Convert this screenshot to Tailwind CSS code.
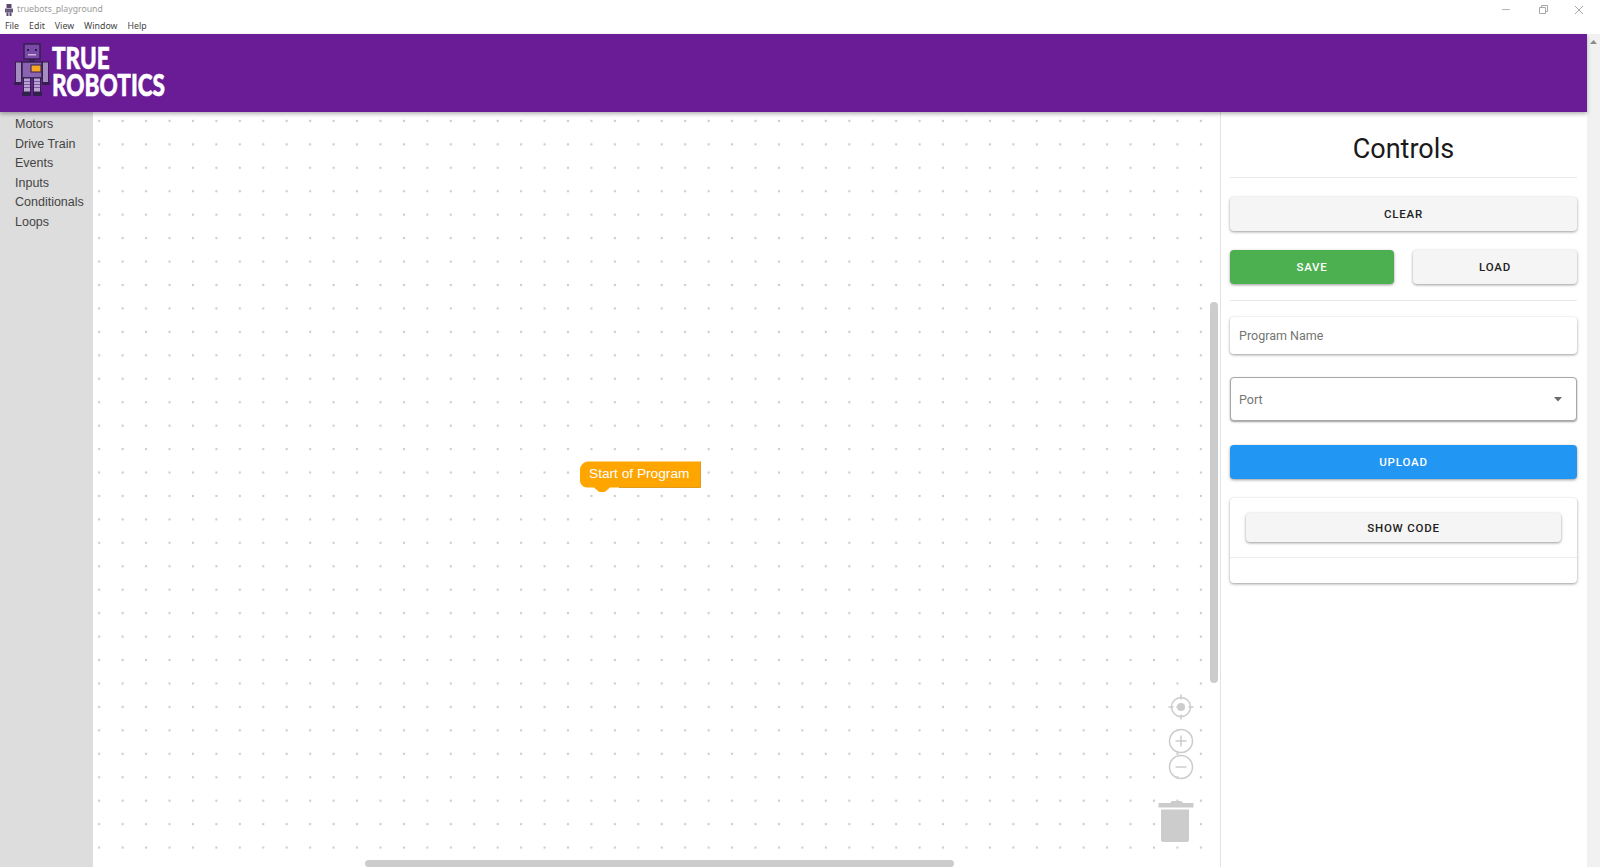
<!DOCTYPE html>
<html lang="en">
<head>
  <meta charset="UTF-8" />
  <title>truebots_playground</title>
  <script src="https://cdn.jsdelivr.net/npm/@tailwindcss/browser@4"></script>
</head>
<body class="bg-white overflow-hidden">
<div class="h-[867px] w-[1600px] flex flex-col overflow-hidden font-['Liberation_Sans',sans-serif]">

  <!-- window title bar -->
  <div class="h-[18px] pt-[1px] flex items-center pl-[4px] relative">
    <svg width="10" height="12" viewBox="0 0 10 12" class="mr-[3px]">
      <rect x="2.5" y="0" width="5" height="4" fill="#5b4a70"/>
      <rect x="1" y="4.500" width="8" height="4" fill="#6a5a80"/>
      <rect x="2.500" y="8.500" width="2" height="3.500" fill="#5b4a70"/>
      <rect x="5.500" y="8.500" width="2" height="3.500" fill="#5b4a70"/>
    </svg>
    <span class="font-['Noto_Sans',sans-serif] text-[8.700px] text-[#9a9a9a]">truebots_playground</span>
    <div class="ml-auto flex items-center h-full">
      <svg width="36" height="18" viewBox="0 0 36 18"><path d="M13 8.500H21" stroke="#b5b5b5" fill="none"/></svg>
      <svg width="36" height="18" viewBox="0 0 36 18"><path d="M14.500 6.500h6v6h-6zM16.500 6.500v-2h6v6h-2" stroke="#a8a8a8" fill="none"/></svg>
      <svg width="36" height="18" viewBox="0 0 36 18" class="mr-[3px]"><path d="M14 5l8 8M22 5l-8 8" stroke="#a8a8a8" fill="none"/></svg>
    </div>
  </div>

  <!-- menu bar -->
  <div class="h-[16px] pt-[2px] flex items-center gap-[10px] pl-[5px] font-['Noto_Sans',sans-serif] text-[8.800px] text-[#444]">
    <span>File</span><span>Edit</span><span>View</span><span>Window</span><span>Help</span>
  </div>

  <div class="flex flex-1 min-h-0">
    <div class="flex flex-col flex-1 min-w-0">

      <!-- app header -->
      <header class="h-[78px] shrink-0 bg-[#6a1b96] flex items-center pl-[14px] relative z-10 shadow-[0_2px_4px_rgba(0,0,0,0.3)]">
        <svg width="36" height="54" viewBox="0 0 36 54" class="mr-[2px] mb-[6px]">
          <rect x="10" y="1" width="16" height="15" fill="#7b4aa8" stroke="#33204f" stroke-width="1.500"/>
          <rect x="13" y="6" width="2" height="2" fill="#2c1c45"/>
          <rect x="21" y="6" width="2" height="2" fill="#2c1c45"/>
          <rect x="14" y="11" width="8" height="1.500" fill="#c9b4dc"/>
          <rect x="15" y="16" width="6" height="3" fill="#33204f"/>
          <rect x="8" y="19" width="20" height="16" fill="#8a64b0" stroke="#33204f" stroke-width="1.500"/>
          <rect x="17" y="22" width="10" height="7" fill="#f5a623" stroke="#33204f"/>
          <rect x="1.500" y="19" width="6" height="21" fill="#a48cc0" stroke="#33204f"/>
          <rect x="28.500" y="19" width="6" height="21" fill="#a48cc0" stroke="#33204f"/>
          <rect x="0" y="39" width="8" height="3" fill="#33204f"/>
          <rect x="28" y="39" width="8" height="3" fill="#33204f"/>
          <rect x="9.500" y="35" width="7" height="14" fill="#b9a6cf" stroke="#33204f"/>
          <rect x="19.500" y="35" width="7" height="14" fill="#b9a6cf" stroke="#33204f"/>
          <path d="M10 38.500h6M10 41.500h6M10 44.500h6M20 38.500h6M20 41.500h6M20 44.500h6" stroke="#7b5a9f"/>
          <rect x="8" y="49" width="9" height="4" fill="#33204f"/>
          <rect x="19" y="49" width="9" height="4" fill="#33204f"/>
        </svg>
        <div class="font-['Lato',sans-serif] font-black text-white text-[30px] leading-[27px] uppercase origin-left scale-x-[0.75] mb-[4px] [-webkit-text-stroke:0.6px_white]">
          <div>True</div>
          <div>Robotics</div>
        </div>
      </header>

      <div class="flex flex-1 min-h-0">
        <!-- block categories -->
        <nav class="w-[93px] shrink-0 bg-[#dddddd] pl-[15px] pt-[3px] text-[12.500px] leading-[19.600px] text-[#444]">
          <div>Motors</div>
          <div>Drive Train</div>
          <div>Events</div>
          <div>Inputs</div>
          <div>Conditionals</div>
          <div>Loops</div>
        </nav>

        <!-- workspace -->
        <main class="w-[1128px] shrink-0 relative border-r border-[#e3e3e3] overflow-hidden">
          <svg class="absolute inset-0" width="1128" height="755">
            <defs>
              <pattern id="dots" x="-5.500" y="-2.800" width="23.440" height="23.440" patternUnits="userSpaceOnUse">
                <circle cx="11.700" cy="11.700" r="1.200" fill="#cccccc"/>
              </pattern>
            </defs>
            <rect width="1128" height="755" fill="url(#dots)"/>
          </svg>

          <!-- start block -->
          <svg class="absolute left-[486px] top-[349px]" width="125" height="34" viewBox="0 0 125 34">
            <path d="M10 0.500H121.500V26.500H31l-4 3.500a3 3 0 0 1-3 1h-2a3 3 0 0 1-3-1l-4-3.500H8a7 7 0 0 1-7-7V9a8.500 8.500 0 0 1 9-8.500z" fill="#ffa500"/>
            <path d="M121.500 0.500V26.500H40" fill="none" stroke="#e09a1e"/>
          </svg>
          <span class="absolute left-[496px] top-[353px] text-[13.700px] leading-[18px] text-white">Start of Program</span>

          <!-- center / zoom controls -->
          <svg class="absolute left-[1074px] top-[581px]" width="28" height="28" viewBox="0 0 28 28" fill="none" stroke="#cccccc" stroke-width="1.500">
            <circle cx="14" cy="14" r="9.500"/>
            <path d="M14 1.500v5M14 21.500v5M1.500 14h5M21.500 14h5"/>
            <circle cx="14" cy="14" r="4" fill="#cccccc" stroke="none"/>
          </svg>
          <svg class="absolute left-[1075px] top-[616px]" width="26" height="26" viewBox="0 0 26 26" fill="none" stroke="#cccccc" stroke-width="1.500">
            <circle cx="13" cy="13" r="11.500"/>
            <path d="M13 7.500v11M7.500 13h11"/>
          </svg>
          <svg class="absolute left-[1075px] top-[642px]" width="26" height="26" viewBox="0 0 26 26" fill="none" stroke="#cccccc" stroke-width="1.500">
            <circle cx="13" cy="13" r="11.500"/>
            <path d="M7.500 13h11"/>
          </svg>
          <!-- trash -->
          <svg class="absolute left-[1065px] top-[686px]" width="36" height="46" viewBox="0 0 36 46">
            <path d="M0.500 5H12l2-2h9l2 2h10.500v4.500H0.500z" fill="#cccccc"/>
            <path d="M3 11.500H31V42a2 2 0 0 1-2 2H5a2 2 0 0 1-2-2z" fill="#cccccc"/>
          </svg>

          <!-- workspace scrollbars -->
          <div class="absolute left-[1117px] top-[190px] w-[8px] h-[381px] rounded-full bg-[#cccccc]"></div>
          <div class="absolute left-[272px] top-[748px] w-[589px] h-[7px] rounded-full bg-[#cccccc]"></div>
        </main>

        <!-- controls panel -->
        <aside class="flex-1 min-w-0 pl-[9px] pr-[10px] font-['Roboto',sans-serif] flex flex-col">
          <h2 class="h-[66px] pt-[10px] flex items-center justify-center border-b border-[#e8e8e8] text-[27px] text-[#1a1a1a] mb-[19px]">Controls</h2>

          <button class="h-[34px] w-full pt-[1px] rounded bg-[#f5f5f5] text-[11.500px] font-medium tracking-[0.800px] text-[#222] shadow-[0_1px_3px_rgba(0,0,0,0.4)]">CLEAR</button>

          <div class="flex justify-between mt-[19px]">
            <button class="h-[34px] w-[164px] pt-[1px] rounded bg-[#4caf50] text-[11.500px] font-medium tracking-[0.800px] text-white shadow-[0_1px_3px_rgba(0,0,0,0.4)]">SAVE</button>
            <button class="h-[34px] w-[164px] pt-[1px] rounded bg-[#f5f5f5] text-[11.500px] font-medium tracking-[0.800px] text-[#222] shadow-[0_1px_3px_rgba(0,0,0,0.4)]">LOAD</button>
          </div>

          <div class="border-b border-[#e8e8e8] h-[17px] mb-[16px]"></div>

          <div class="h-[37px] rounded bg-white flex items-center pl-[9px] pt-[1px] text-[12.500px] text-[#757575] shadow-[0_1px_3px_rgba(0,0,0,0.4)]">Program Name</div>

          <div class="h-[44px] mt-[23px] rounded border border-[#a8a8a8] bg-white flex items-center justify-between pl-[8px] pr-[13px] text-[12.500px] text-[#757575] shadow-[0_1px_2px_rgba(0,0,0,0.4)]">
            <span class="pt-[2px]">Port</span>
            <svg width="10" height="5" viewBox="0 0 10 5"><path d="M1 0H9L5 4.500z" fill="#6b6b6b"/></svg>
          </div>

          <button class="h-[34px] w-full pt-[1px] mt-[24px] rounded bg-[#2196f3] text-[11.500px] font-medium tracking-[0.800px] text-white shadow-[0_1px_3px_rgba(0,0,0,0.4)]">UPLOAD</button>

          <div class="h-[85px] mt-[19px] rounded bg-white shadow-[0_1px_3px_rgba(0,0,0,0.4)] flex flex-col">
            <div class="h-[60px] border-b border-[#ececec] px-[16px] pt-[15px]">
              <button class="h-[29px] w-full pt-[2px] rounded bg-[#f5f5f5] text-[11.500px] font-medium tracking-[0.800px] text-[#222] shadow-[0_1px_3px_rgba(0,0,0,0.4)]">SHOW CODE</button>
            </div>
          </div>
        </aside>
      </div>
    </div>

    <!-- page scrollbar -->
    <div class="w-[13px] shrink-0 bg-[#f1f1f1] flex justify-center pt-[6px]">
      <svg width="7" height="4" viewBox="0 0 7 4"><path d="M0 4L3.500 0 7 4z" fill="#8c8c8c"/></svg>
    </div>
  </div>
</div>
</body>
</html>
